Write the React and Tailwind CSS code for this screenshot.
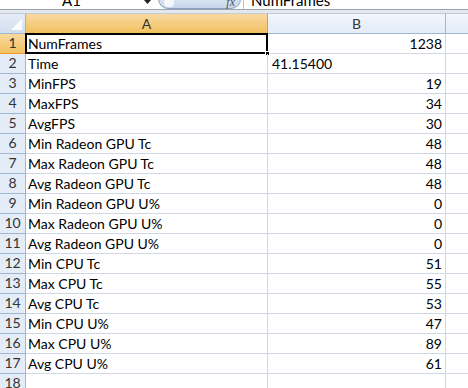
import React from "react";

const rows = [
  ["NumFrames", "1238"],
  ["Time", "41.15400", true],
  ["MinFPS", "19"],
  ["MaxFPS", "34"],
  ["AvgFPS", "30"],
  ["Min Radeon GPU Tc", "48"],
  ["Max Radeon GPU Tc", "48"],
  ["Avg Radeon GPU Tc", "48"],
  ["Min Radeon GPU U%", "0"],
  ["Max Radeon GPU U%", "0"],
  ["Avg Radeon GPU U%", "0"],
  ["Min CPU Tc", "51"],
  ["Max CPU Tc", "55"],
  ["Avg CPU Tc", "53"],
  ["Min CPU U%", "47"],
  ["Max CPU U%", "89"],
  ["Avg CPU U%", "61"],
  ["", ""],
];

const font = { fontFamily: "Lato, 'Liberation Sans', sans-serif" };

export default function App() {
  return (
    <div className="w-[468px] h-[388px] overflow-hidden bg-white text-black text-[14px]" style={font}>
      {/* formula bar strip */}
      <div className="h-[9px] flex items-end overflow-hidden bg-white">
        <div className="w-[158px] h-[9px] flex items-end">
          <span className="pl-[62px] w-[144px] text-[15px] leading-[15px] mb-[1px]">A1</span>
          <svg width="7" height="5" viewBox="0 0 7 5" className="mb-[4px]"><polygon points="0,0 7,0 3.5,4" fill="#222" /></svg>
        </div>
        <div className="w-[83px] h-[20px] self-end flex items-end justify-between px-[5px] pb-[1px] rounded-[10px] border border-[#8ba1c0] bg-gradient-to-b from-[#eef3fb] to-[#c6d5ea]">
          <span className="w-[10px] h-[8px] rounded-full bg-white/80"></span>
          <span className="text-[12px] italic text-[#555] leading-[10px]" style={{ fontFamily: "'Liberation Serif', serif" }}>fx</span>
        </div>
        <div className="ml-[2px] h-[9px] flex-1 border-l border-[#b9c3d0] pl-[7px] flex items-end">
          <span className="text-[15px] leading-[15px] mb-[1px]">NumFrames</span>
        </div>
      </div>
      <div className="h-px bg-[#9aa5b3]"></div>
      <div className="h-[3px] bg-[#e3e8ef]"></div>
      <div className="h-px bg-[#c3cbd6]"></div>

      <div className="grid grid-cols-[26px_242px_178px_1fr]">
        {/* header */}
        <div className="h-[20px] flex items-end justify-end pr-[3px] pb-[3px] border-r border-b border-[#9eb6ce] bg-gradient-to-b from-[#e4ecf7] to-[#d3dfee]">
          <svg width="11" height="11" viewBox="0 0 11 11"><polygon points="11,0 11,11 0,11" fill="#ffffff" /></svg>
        </div>
        <div className="h-[20px] flex items-center justify-center border-r border-b border-[#f29536] bg-gradient-to-b from-[#f9d99f] to-[#f1c15f] text-[14px] text-[#333]">A</div>
        <div className="h-[20px] flex items-center justify-center border-r border-b border-[#9eb6ce] bg-gradient-to-b from-[#f3f6fb] to-[#e4ecf7] text-[14px] text-[#333]">B</div>
        <div className="h-[20px] border-b border-[#9eb6ce] bg-gradient-to-b from-[#f3f6fb] to-[#e4ecf7]"></div>

        {rows.map((r, i) => (
          <React.Fragment key={i}>
            <div
              className={
                "h-[20px] flex items-end justify-center pb-[1px] leading-[18px] border-r border-b text-[14px] text-[#333] " +
                (i === 0
                  ? "border-[#f29536] bg-gradient-to-b from-[#f9d99f] to-[#f1c15f]"
                  : "border-[#9eb6ce] bg-[#e4ecf7]")
              }
            >
              {i + 1}
            </div>
            <div className="h-[20px] relative flex items-end pl-[2px] border-r border-b border-[#d0d7e5] leading-[18px] whitespace-nowrap">
              {r[0]}
              {i === 0 && (
                <>
                  <div className="absolute left-[-1px] top-[-1px] right-[-1px] bottom-[-1px] border-2 border-black"></div>
                  <div className="absolute right-[-3px] bottom-[-3px] w-[5px] h-[5px] bg-black border border-white"></div>
                </>
              )}
            </div>
            <div
              className={
                "h-[20px] flex items-end border-r border-b border-[#d0d7e5] leading-[18px] whitespace-nowrap " +
                (r[2] ? "justify-start pl-[4px]" : "justify-end pr-[3px]")
              }
            >
              {r[1]}
            </div>
            <div className="h-[20px] border-b border-[#d0d7e5]"></div>
          </React.Fragment>
        ))}
      </div>
    </div>
  );
}
